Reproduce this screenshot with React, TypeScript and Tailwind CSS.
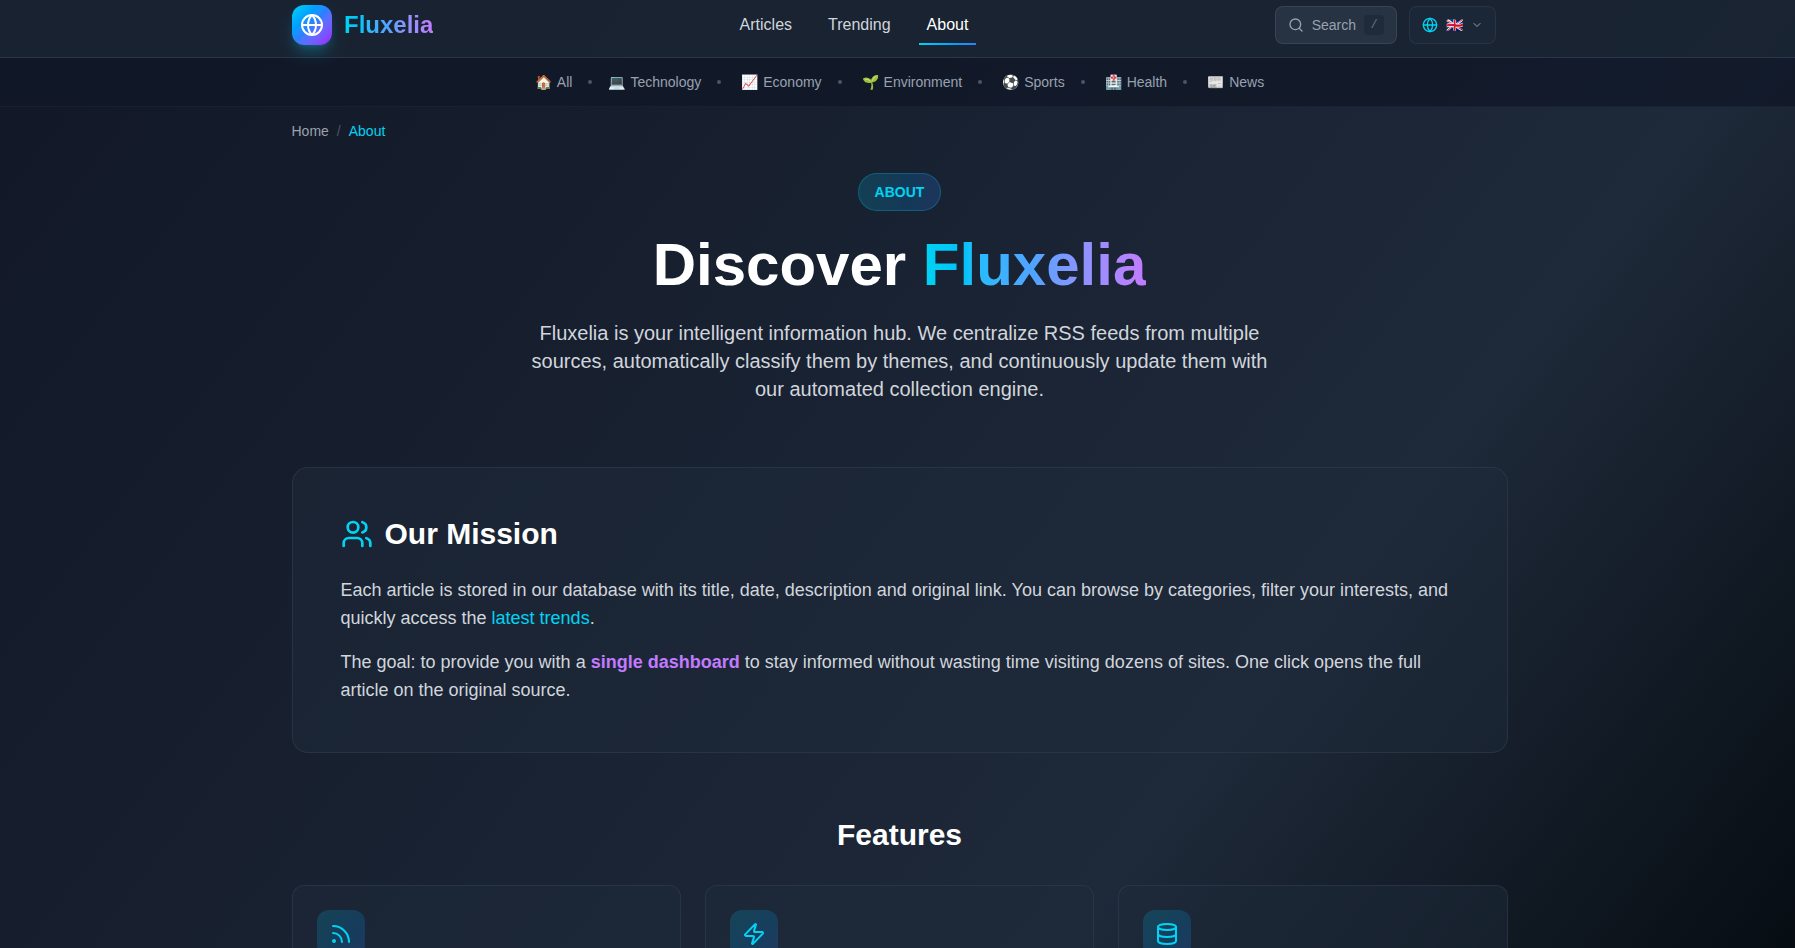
import { ChevronDown, Database, Globe, Rss, Search, Users, Zap } from "lucide-react";

const mainLinks = [
  { label: "Articles", href: "#articles" },
  { label: "Trending", href: "#trending" },
  { label: "About", href: "#about", active: true },
];

const categories = [
  { icon: "🏠", label: "All" },
  { icon: "💻", label: "Technology" },
  { icon: "📈", label: "Economy" },
  { icon: "🌱", label: "Environment" },
  { icon: "⚽", label: "Sports" },
  { icon: "🏥", label: "Health" },
  { icon: "📰", label: "News" },
];

const features = [
  { name: "rss", Icon: Rss },
  { name: "fast", Icon: Zap },
  { name: "database", Icon: Database },
];

const gradientText =
  "bg-linear-to-r from-cyan-400 via-blue-400 to-purple-400 bg-clip-text text-transparent";

function Header() {
  return (
    <header className="border-b border-gray-700/60 bg-[#1a2332]/90 pl-[5px]">
      <div className="mx-auto flex max-w-7xl items-center justify-between pt-[5px] pr-11 pb-3 pl-8">
        <a href="#home" className="flex items-center gap-3">
          <span className="flex size-10 items-center justify-center rounded-xl bg-linear-to-br from-cyan-400 via-blue-500 to-purple-600 shadow-lg shadow-cyan-500/30">
            <Globe size={24} color="#ffffff" strokeWidth={2} />
          </span>
          <span className={`text-2xl font-bold ${gradientText}`}>Fluxelia</span>
        </a>

        <nav className="flex items-center gap-5">
          {mainLinks.map((link) => (
            <a
              key={link.label}
              href={link.href}
              className={`relative px-2 py-2 text-base ${link.active ? "text-white" : "text-gray-300"}`}
            >
              {link.label}
              {link.active && (
                <span className="absolute inset-x-0 bottom-0 h-0.5 bg-linear-to-r from-cyan-400 to-blue-500" />
              )}
            </a>
          ))}
        </nav>

        <div className="flex items-center gap-3">
          <button
            type="button"
            className="flex h-[38px] items-center gap-2 rounded-lg border border-gray-600/50 bg-gray-700/50 px-3 text-sm text-gray-400"
          >
            <Search size={16} />
            <span>Search</span>
            <kbd className="w-5 rounded bg-gray-800/80 text-center font-['Liberation_Mono',monospace] text-xs leading-5 text-gray-500">
              /
            </kbd>
          </button>
          <button
            type="button"
            aria-label="Language"
            className="flex h-[38px] items-center gap-2 rounded-lg border border-gray-700/50 bg-gray-800/50 px-3 text-sm"
          >
            <Globe size={16} className="text-cyan-400" />
            <span>🇬🇧</span>
            <ChevronDown size={12} className="text-gray-400" />
          </button>
        </div>
      </div>
    </header>
  );
}

function CategoryBar() {
  return (
    <nav className="border-b border-gray-800/50 bg-gray-900/80 pl-1">
      <ul className="flex h-12 items-center justify-center text-sm text-gray-400">
        {categories.map((cat, i) => (
          <li key={cat.label} className="flex items-center">
            {i > 0 && <span className="mx-4 size-1 rounded-full bg-gray-600" />}
            <a
              href={`#${cat.label.toLowerCase()}`}
              className={`flex gap-[5px] ${i > 1 ? "ml-1" : ""}`}
            >
              <span>{cat.icon}</span>
              <span>{cat.label}</span>
            </a>
          </li>
        ))}
      </ul>
    </nav>
  );
}

export default function App() {
  return (
    <div className="min-h-screen bg-[linear-gradient(127.5deg,#111726_0px,#1e2939_1424px,#050b10_2040px)] font-['Liberation_Sans',Arial,sans-serif]">
      <Header />
      <CategoryBar />

      <main className="pl-1">
        <div className="mx-auto max-w-7xl px-8 pt-3.5 pb-16">
          {/* Breadcrumb */}
          <nav className="flex gap-2 text-sm">
            <a href="#home" className="text-gray-400">Home</a>
            <span className="text-gray-600">/</span>
            <span className="text-cyan-400">About</span>
          </nav>

          {/* Hero */}
          <section className="mt-8 flex flex-col items-center text-center">
            <span className="rounded-full border border-cyan-500/30 bg-linear-to-r from-cyan-500/20 to-blue-500/20 px-4 py-2 text-sm font-semibold text-cyan-400">
              ABOUT
            </span>
            <h1 className="mt-6 text-6xl leading-none font-bold text-white">
              Discover <span className={gradientText}>Fluxelia</span>
            </h1>
            <p className="mt-6 max-w-3xl text-xl text-gray-300">
              Fluxelia is your intelligent information hub. We centralize RSS feeds from multiple
              sources, automatically classify them by themes, and continuously update them with our
              automated collection engine.
            </p>
          </section>

          {/* Mission */}
          <section className="mt-16 rounded-2xl border border-gray-700/50 bg-gray-800/50 p-12">
            <h2 className="flex items-center gap-3 text-3xl font-bold text-white">
              <Users size={32} className="text-cyan-400" />
              Our Mission
            </h2>
            <div className="mt-6 space-y-4 text-lg text-gray-300">
              <p>
                Each article is stored in our database with its title, date, description and
                original link. You can browse by categories, filter your interests, and quickly
                access the <a href="#trending" className="text-cyan-400">latest trends</a>.
              </p>
              <p>
                The goal: to provide you with a{" "}
                <strong className="font-semibold text-purple-400">single dashboard</strong> to stay
                informed without wasting time visiting dozens of sites. One click opens the full
                article on the original source.
              </p>
            </div>
          </section>

          {/* Features */}
          <section className="mt-16">
            <h2 className="text-center text-3xl font-bold text-white">Features</h2>
            <div className="mt-8 grid grid-cols-3 gap-6">
              {features.map(({ name, Icon }) => (
                <div key={name} className="rounded-xl border border-gray-700/50 bg-gray-800/50 p-6">
                  <div className="flex size-12 items-center justify-center rounded-xl bg-linear-to-br from-cyan-500/20 to-blue-500/20">
                    <Icon size={24} className="text-cyan-400" />
                  </div>
                </div>
              ))}
            </div>
          </section>
        </div>
      </main>
    </div>
  );
}
